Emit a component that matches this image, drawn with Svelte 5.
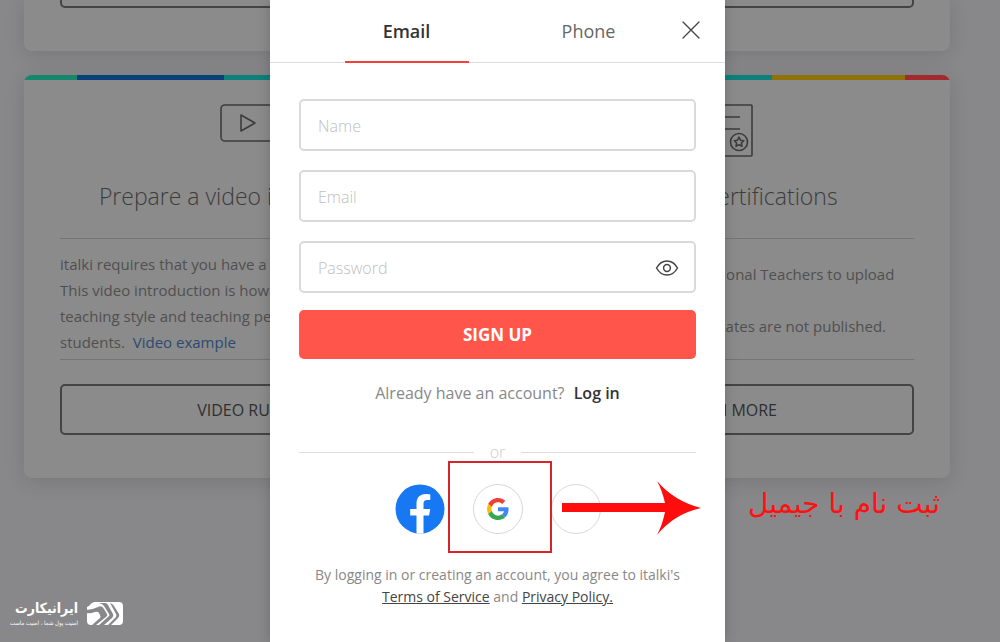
<script>
  let name = $state('');
  let email = $state('');
  let password = $state('');
</script>

<main class="page">
  <section class="cards">
    <article class="card previous"><button class="outline" aria-label="Details"></button></article>
    <article class="card previous"><button class="outline" aria-label="Details"></button></article>
  </section>

  <section class="cards">
    <article class="card striped left">
      <div class="icon">
        <svg width="54" height="38" viewBox="0 0 54 38" fill="none" stroke="#3c3c3c" stroke-width="1.6" stroke-linejoin="round">
          <rect x="1" y="1" width="52" height="36" rx="4" />
          <path d="M21 11v16l14-8z" />
        </svg>
      </div>
      <h2>Prepare a video introduction</h2>
      <div class="copy">
        <p>italki requires that you have a video introduction.<br />This video introduction is how you present your<br />teaching style and teaching personality to new<br />students.&nbsp; <a href="#example">Video example</a></p>
      </div>
      <button class="outline">VIDEO RULES</button>
    </article>
    <article class="card striped right">
      <div class="icon">
        <svg width="50" height="54" viewBox="0 0 50 54" fill="none" stroke="#3c3c3c" stroke-width="1.6" stroke-linejoin="round">
          <rect x="1" y="1" width="48" height="51" rx="1" />
          <path d="M10 13h27M10 25h27" />
          <circle cx="36" cy="38" r="8.5" />
          <path d="M36 33.2l1.5 3 3.3.5-2.4 2.3.6 3.3-3-1.6-3 1.6.6-3.3-2.4-2.3 3.3-.5z" />
        </svg>
      </div>
      <h2>Teacher certifications</h2>
      <div class="copy">
        <p>We require all our Professional Teachers to upload<br />certificates.<br />And your uploaded certificates are not published.</p>
      </div>
      <button class="outline">LEARN MORE</button>
    </article>
  </section>

  <div class="caption" dir="rtl" lang="fa">ثبت نام با جیمیل</div>

  <footer class="brand" lang="fa">
    <div class="brand-text" dir="rtl">
      <strong>ایرانیکارت</strong>
      <small>امنیت پول شما ، امنیت ماست</small>
    </div>
    <svg width="38" height="25" viewBox="0 0 38 25">
      <path fill="#fff" d="M9 1h24q4 0 4 4v15q0 4-4 4H5q-4 0-4-4V6l2-1q3-4 6-4z" />
      <g fill="#88888b">
        <path d="M0 9Q6 9 12 6q4-2 6 2l3 5q1 2-1 3l-10 8H6l8-7q1-1 0-3l-1-2q-1-2-4-1-5 2-9 1z" />
        <path d="M13 2h6q2 0 3 2l5 9q1 2-1 4l-8 7h-5l10-9q1-1 0-2l-5-8q-1-2-5-3z" />
        <path d="M24 2q3 1 4 3l5 8q1 2-1 4l-7 7h-3l8-8q1-1 0-3z" />
      </g>
    </svg>
  </footer>

  <div class="overlay">
    <div class="modal" role="dialog" aria-label="Sign up">
      <header>
        <nav>
          <button class="tab active">Email</button>
          <button class="tab">Phone</button>
        </nav>
        <button class="close" aria-label="Close">
          <svg width="18" height="18" viewBox="0 0 18 18" stroke="#444" stroke-width="1.3" stroke-linecap="round"><path d="M1 1l16 16M17 1L1 17" /></svg>
        </button>
      </header>

      <form onsubmit={(event) => event.preventDefault()}>
        <input aria-label="Name" placeholder="Name" bind:value={name} />
        <input aria-label="Email" type="email" placeholder="Email" bind:value={email} />
        <div class="password">
          <input aria-label="Password" type="password" placeholder="Password" bind:value={password} />
          <button type="button" class="eye" aria-label="Show password">
            <svg width="24" height="18" viewBox="0 0 24 18" fill="none" stroke="#444" stroke-width="1.5"><path d="M1.500 9C4 4.500 7.500 2 12 2s8 2.500 10.500 7C20 13.500 16.500 16 12 16S4 13.500 1.500 9z" /><circle cx="12" cy="9" r="3.400" /></svg>
          </button>
        </div>
        <button class="submit">SIGN UP</button>
      </form>

      <p class="login">Already have an account? <a href="#login">Log in</a></p>
      <div class="or"><span>or</span></div>

      <div class="social">
        <button class="round" aria-label="Facebook">
          <svg width="50" height="50" viewBox="0 0 50 50"><circle cx="25" cy="25" r="24.500" fill="#1877f2" /><path fill="#fff" d="M21.500 49.300V31.500H15.200V25h6.300v-5.400c0-6.200 3.600-9.600 9.200-9.600 1.800 0 3.800.3 4.600.5v5.400h-3c-2.900 0-3.800 1.700-3.800 3.600V25h6.700l-1.100 6.500h-5.600v17.800a24.500 24.500 0 0 1-7 0z" /></svg>
        </button>
        <button class="round ring google" aria-label="Google">
          <svg width="22" height="22" viewBox="0 0 48 48"><path fill="#ea4335" d="M24 9.500c3.540 0 6.710 1.220 9.210 3.600l6.850-6.850C35.900 2.380 30.470 0 24 0 14.620 0 6.510 5.380 2.560 13.220l7.980 6.190C12.430 13.720 17.740 9.500 24 9.500z" /><path fill="#4285f4" d="M46.980 24.550c0-1.570-.15-3.090-.38-4.550H24v9.020h12.940c-.58 2.960-2.260 5.480-4.780 7.180l7.730 6c4.510-4.180 7.090-10.360 7.090-17.650z" /><path fill="#fbbc05" d="M10.530 28.590A14.500 14.500 0 0 1 9.770 24c0-1.600.27-3.140.76-4.590l-7.980-6.190A23.900 23.900 0 0 0 0 24c0 3.880.92 7.540 2.560 10.780z" /><path fill="#34a853" d="M24 48c6.480 0 11.930-2.130 15.890-5.810l-7.730-6C30 37.640 27.240 38.500 24 38.500c-6.260 0-11.570-4.220-13.470-9.910l-7.980 6.190C6.510 42.620 14.620 48 24 48z" /></svg>
          <span class="highlight"></span>
        </button>
        <button class="round ring more" aria-label="More options">
          <svg class="arrow" width="140" height="56" viewBox="0 0 140 56"><path fill="#ff0d0d" d="M0 23h103Q100 10 95 1q17 20 44 27-27 6-44 27 5-9 8-23H0z" /></svg>
        </button>
      </div>

      <p class="legal">By logging in or creating an account, you agree to italki's<br /><a href="#terms">Terms of Service</a> and <a href="#privacy">Privacy Policy.</a></p>
    </div>
  </div>
</main>

<style>
  :global(body) { margin: 0; }
  * { box-sizing: border-box; }
  .page {
    position: relative;
    min-height: 100vh;
    overflow: hidden;
    background: #88888b;
    color: #505050;
    font-family: "Open Sans", "Noto Sans", sans-serif;
    font-size: 16px;
  }
  button, input { font: inherit; margin: 0; padding: 0; }
  button { background: none; border: 0; cursor: pointer; }
  .cards {
    display: grid;
    grid-template-columns: 1fr 1fr;
    gap: 36px;
    padding: 0 50px 0 24px;
    margin-bottom: 24px;
  }
  .card {
    display: flex;
    flex-direction: column;
    padding: 0 36px 43px;
    border-radius: 8px;
    background: #8b8b8b;
    box-shadow: 0 4px 20px rgba(0, 0, 0, 0.12);
  }
  .outline {
    height: 51px;
    border: 2px solid #444;
    border-radius: 5px;
    color: #2f2f2f;
  }
  .previous { border-radius: 0 0 8px 8px; }
  .previous .outline { margin-top: -43px; }
  .striped { position: relative; padding-top: 29px; overflow: hidden; }
  .striped::before { content: ""; position: absolute; inset: 0 0 auto; height: 5px; }
  .left::before { background: linear-gradient(90deg, #15876a 12%, #0b417b 12% 45%, #0c8079 45%); }
  .right::before { background: linear-gradient(90deg, #0c8079 60%, #8f7208 60% 90%, #a3292e 90%); }
  .icon { height: 54px; display: flex; justify-content: center; align-items: flex-start; }
  h2 { margin: 20px 0 24px; font-size: 23px; line-height: 36px; font-weight: 300; color: #3c3c3c; text-align: center; white-space: nowrap; }
  .copy {
    height: 122px;
    margin-bottom: 24px;
    padding-top: 12px;
    border: solid #747474;
    border-width: 1px 0;
    white-space: nowrap;
  }
  .right .copy { padding-top: 22px; }
  .copy p { margin: 0; font-size: 15px; line-height: 26px; }
  .copy a { color: #2c4a70; text-decoration: none; }

  .caption {
    position: absolute;
    top: 484px;
    right: 60px;
    color: #f11;
    font: 28px/40px "DejaVu Sans", sans-serif;
  }
  .brand {
    position: absolute;
    left: 16px;
    bottom: 14px;
    display: flex;
    align-items: center;
    gap: 8px;
    color: #fff;
    font-family: "DejaVu Sans Condensed", "DejaVu Sans", sans-serif;
  }
  .brand-text { display: flex; flex-direction: column; width: 62px; white-space: nowrap; }
  .brand strong { font-size: 14px; line-height: 20px; }
  .brand small { font-size: 6px; line-height: 10px; }

  .overlay {
    position: absolute;
    inset: 0;
    display: flex;
    justify-content: center;
    padding-right: 5px;
    pointer-events: none;
  }
  .modal {
    width: 455px;
    background: #fff;
    color: #888;
    pointer-events: auto;
    box-shadow: 0 0 12px rgba(0, 0, 0, 0.2);
  }
  header { position: relative; height: 63px; border-bottom: 1px solid #ddd; }
  nav { display: flex; justify-content: center; gap: 58px; height: 63px; }
  .tab { width: 124px; font-size: 18px; color: #666; border-bottom: 2px solid transparent; }
  .active { color: #333; font-weight: 600; border-color: #f0413c; }
  .close { position: absolute; right: 25px; top: 21px; width: 18px; height: 18px; }
  .close svg, .eye svg, .round svg { display: block; }
  form { display: flex; flex-direction: column; gap: 19px; padding: 36px 29px 0; }
  input {
    display: block;
    width: 100%;
    height: 52px;
    padding: 2px 17px 0;
    border: 2px solid #dadada;
    border-radius: 5px;
    background: #fff;
    color: #333;
    outline: 0;
  }
  input::placeholder { color: #c0c0c0; font-weight: 300; opacity: 1; }
  .password { position: relative; }
  .eye { position: absolute; right: 17px; top: 18px; }
  .submit { height: 49px; margin-top: -2px; border-radius: 5px; background: #ff554b; color: #fff; font-size: 17px; font-weight: 700; }
  .login { margin: 21px 0 0; font-size: 16px; line-height: 26px; text-align: center; }
  .login a { margin-left: 5px; color: #333; font-weight: 600; text-decoration: none; }
  .or { display: flex; align-items: center; gap: 16px; margin: 36px 29px 0; color: #ccc; line-height: 20px; font-weight: 300; }
  .or::before, .or::after { content: ""; flex: 1; height: 1px; background: #ddd; }
  .social { display: flex; justify-content: center; gap: 28px; margin-top: 22px; }
  .round { position: relative; width: 50px; height: 50px; border-radius: 50%; }
  .ring { display: grid; place-items: center; border: 1px solid #d8d8d8; }
  .highlight { position: absolute; left: -26px; top: -24px; width: 104px; height: 92px; border: 2px solid #d8232a; z-index: 1; }
  .arrow { position: absolute; left: 10px; top: -5px; }
  .legal { margin: 30px 0 0; font-size: 14px; line-height: 22px; text-align: center; white-space: nowrap; }
  .legal a { color: #444; }
</style>
